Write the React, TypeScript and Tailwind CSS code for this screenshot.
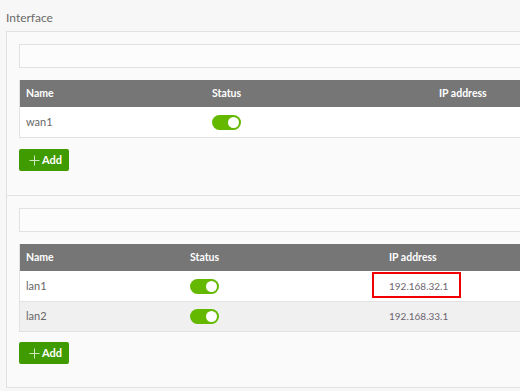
import React from "react";

const font = { fontFamily: "Lato, 'Open Sans', sans-serif" };

function Toggle() {
  return (
    <div className="w-[29px] h-[15px] rounded-full bg-[#64b900] flex items-center justify-end pr-[2px]">
      <div className="w-[11px] h-[11px] rounded-full bg-white" />
    </div>
  );
}

function AddButton() {
  return (
    <button className="w-[50px] h-[22px] rounded-[2px] bg-[#3f9b00] flex items-center pl-[10px] gap-[2px] text-white text-[11px] font-bold">
      <svg width="11" height="11" viewBox="0 0 11 11">
        <path d="M5.5 0.5V10.5M0.5 5.5H10.5" stroke="#cfe8bd" strokeWidth="1" />
      </svg>
      <span>Add</span>
    </button>
  );
}

type Row = { name: string; ip?: string; highlight?: boolean };

function Table({
  cols,
  rows,
}: {
  cols: [number, number];
  rows: Row[];
}) {
  return (
    <div className="mt-[12px] border-l border-b border-[#e2e2e2] w-[560px]">
      <div className="h-[27px] bg-[#767676] flex items-center text-white text-[10.5px] font-bold">
        <div className="pl-[6px]" style={{ width: cols[0] }}>Name</div>
        <div style={{ width: cols[1] }}>Status</div>
        <div>IP address</div>
      </div>
      {rows.map((r, i) => (
        <div
          key={r.name}
          className={`h-[30px] flex items-center text-[11px] text-[#666666] ${
            i % 2 === 1 ? "bg-[#f0f0f0] border-t border-[#e2e2e2]" : "bg-white"
          }`}
        >
          <div className="pl-[6px]" style={{ width: cols[0] }}>{r.name}</div>
          <div style={{ width: cols[1] }}>
            <Toggle />
          </div>
          {r.ip && (
            <div className="relative">
              <span className="text-[10px] text-[#6b6570]">{r.ip}</span>
              {r.highlight && (
                <div className="absolute left-[-17px] top-[-6px] w-[89px] h-[26px] border-2 border-[#f00000]" />
              )}
            </div>
          )}
        </div>
      ))}
    </div>
  );
}

export default function App() {
  return (
    <div className="w-[520px] h-[391px] overflow-hidden bg-[#f6f7f6]" style={font}>
      <div className="h-[31px] pl-[6px] pt-[9px] text-[12px] text-[#6a6a6a]">Interface</div>
      <div className="ml-[6px] w-[600px] border border-[#e1e1e1] bg-[#fafafa]">
        <div className="px-[12px] pt-[12px] pb-[24px] border-b border-[#e1e1e1]">
          <div className="h-[24px] w-[560px] border border-[#e2e2e2] bg-[#fcfcfc]" />
          <Table cols={[192, 227]} rows={[{ name: "wan1" }]} />
          <div className="mt-[11px]">
            <AddButton />
          </div>
        </div>
        <div className="px-[12px] pt-[12px] pb-[23px]">
          <div className="h-[24px] w-[560px] border border-[#e2e2e2] bg-[#fcfcfc]" />
          <Table
            cols={[170, 199]}
            rows={[
              { name: "lan1", ip: "192.168.32.1", highlight: true },
              { name: "lan2", ip: "192.168.33.1" },
            ]}
          />
          <div className="mt-[10px]">
            <AddButton />
          </div>
        </div>
      </div>
    </div>
  );
}
